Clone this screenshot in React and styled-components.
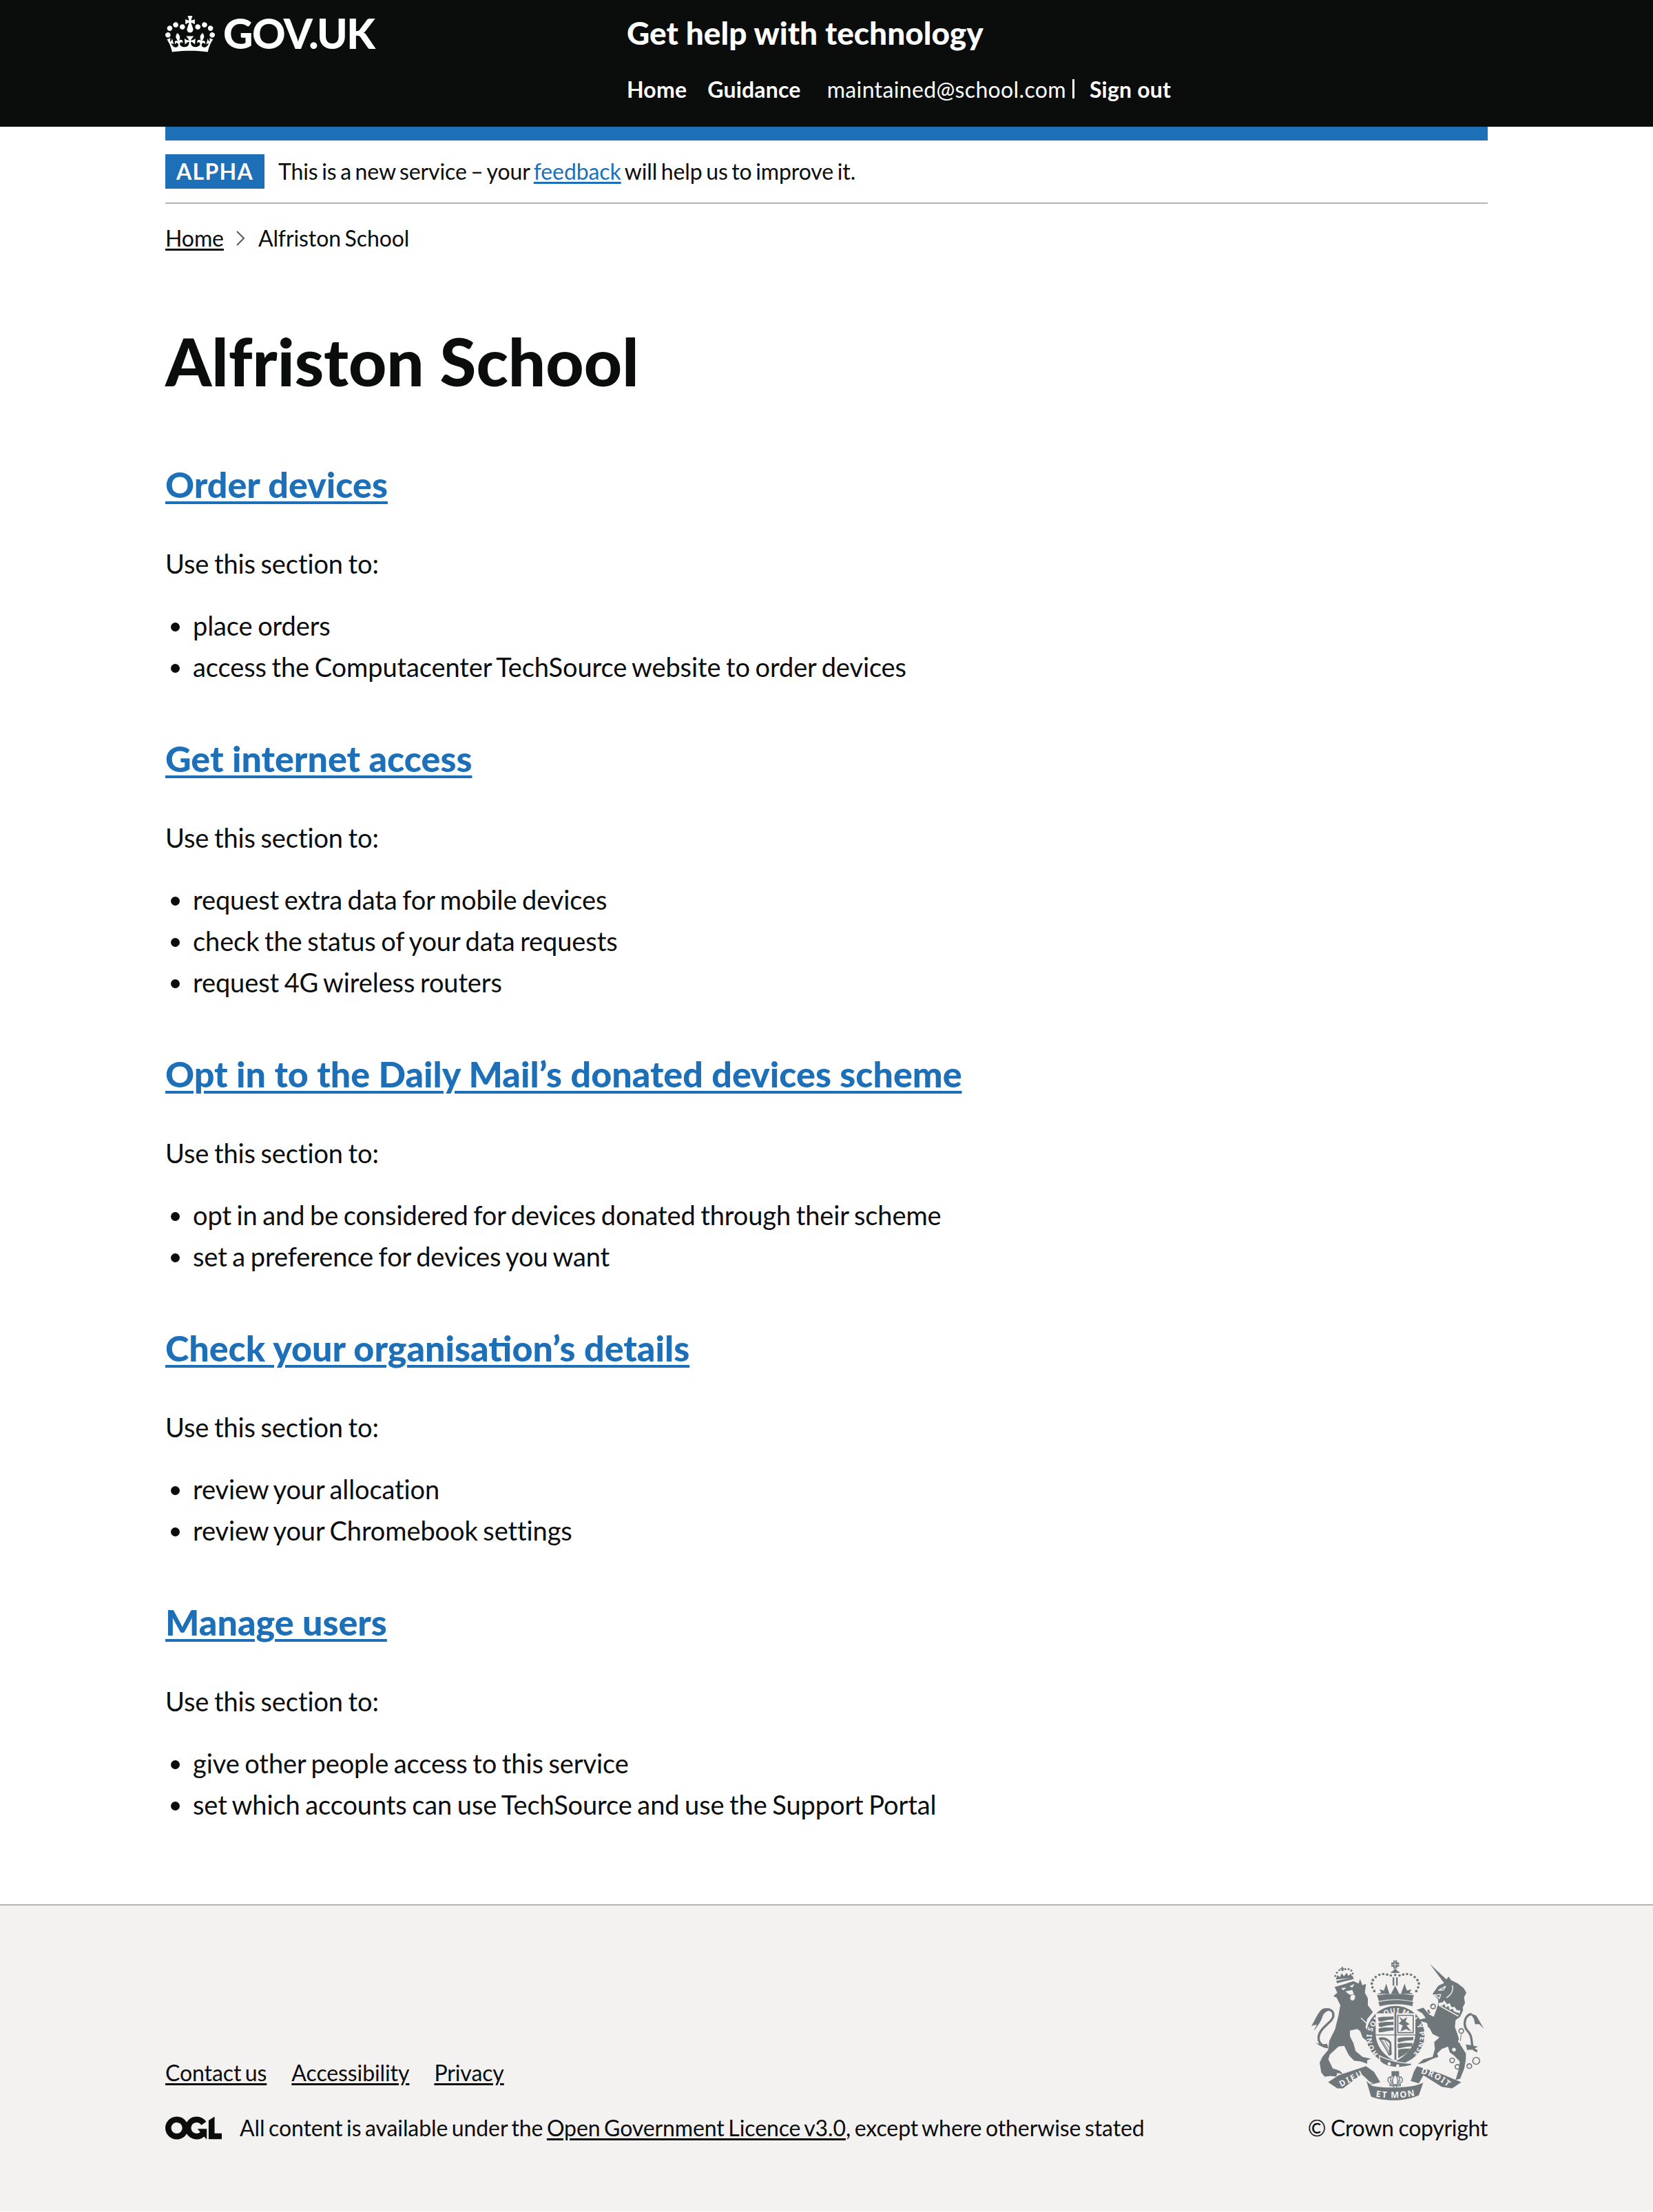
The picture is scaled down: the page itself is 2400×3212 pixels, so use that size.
import React from 'react';
import styled, { createGlobalStyle } from 'styled-components';

const font = `Lato, "Noto Sans", Arial, sans-serif`;
const Global = createGlobalStyle`
  html, body { margin: 0; padding: 0; background: #fff; }
  body { font-family: ${font}; color: #0b0c0c; }
`;

const Header = styled.header`
  background: #0b0c0c; height: 184px; color: #fff;
`;
const Wrap = styled.div`
  width: 1920px; margin: 0 auto;
`;
const HeaderInner = styled(Wrap)`
  display: flex;
`;
const LogoCol = styled.a`
  width: 670px; display: flex; align-items: flex-start; padding-top: 23px; gap: 12px; color: #fff;
`;
const Crown = styled.svg`
  width: 72px; height: 53px; flex: none;
`;
const LogoText = styled.span`
  font: 900 60px/50px ${font}; letter-spacing: -1.5px;
`;
const Service = styled.div`
  padding-top: 20px; display: flex; flex-direction: column;
`;
const ServiceName = styled.div`
  font: 900 46px/56px ${font}; color: #fff;
`;
const Nav = styled.nav`
  display: flex; align-items: center; margin-top: 34px; font: 400 32px/40px ${font};
`;
const NavLink = styled.a`
  font-weight: 700; color: #fff; margin-right: ${p => p.$mr ?? 30}px; letter-spacing: 0.2px;
`;
const NavUser = styled.span`
  margin-left: 8px; padding-right: 12px; margin-right: 22px; position: relative; letter-spacing: 0.35px;
  &::after { content: ""; position: absolute; right: 0; top: 5px; width: 3px; height: 28px; background: #fff; }
`;
const Phase = styled(Wrap)`
  border-top: 20px solid #1d70b8; border-bottom: 2px solid #b1b4b6; padding: 20px 0; display: flex; align-items: center; height: 50px;
`;
const Tag = styled.strong`
  background: #1d70b8; color: #fff; height: 50px; width: 144px; display: flex; align-items: center; justify-content: center;
  font: 700 32px/40px ${font}; letter-spacing: 1.3px; margin-right: 20px; flex: none;
`;
const PhaseText = styled.span`
  font: 400 32px/40px ${font}; letter-spacing: -0.1px; word-spacing: -2.5px;
  a { color: #1d70b8; text-underline-offset: 3px; }
`;
const Breadcrumb = styled(Wrap)`
  display: flex; align-items: center; height: 40px; margin-top: 30px; font: 400 32px/40px ${font}; letter-spacing: -0.1px; word-spacing: -2.5px;
  a { color: #0b0c0c; text-underline-offset: 3px; }
`;
const Chevron = styled.svg`
  width: 16px; height: 24px; margin: 0 18px 0 16px;
`;
const Main = styled(Wrap)`
  padding: 108px 0 42px;
`;
const H1 = styled.h1`
  margin: 0 0 99px; font: 900 96px/100px ${font};
`;
const H2 = styled.h2`
  margin: 0 0 60px; font: 900 52px/60px ${font};
  a { color: #1d70b8; text-underline-offset: 5px; text-decoration-thickness: 4px; }
`;
const P = styled.p`
  margin: 0 0 40px; font: 400 38px/50px ${font}; letter-spacing: -0.1px; word-spacing: -2px;
`;
const List = styled.ul`
  margin: 0 0 78px; padding: 0 0 0 40px; font: 400 38px/50px ${font}; letter-spacing: -0.1px; word-spacing: -2px;
  li { margin-bottom: 10px; }
`;
const Footer = styled.footer`
  background: #f3f2f1; border-top: 2px solid #b1b4b6; height: 446px; box-sizing: border-box;
`;
const FooterInner = styled(Wrap)`
  display: flex; justify-content: space-between; align-items: flex-start; padding-top: 78px;
`;
const FooterLeft = styled.div`
  padding-top: 145px; font: 400 32px/40px ${font}; letter-spacing: -0.1px; word-spacing: -2.5px;
  a { color: #0b0c0c; text-underline-offset: 3px; }
`;
const FooterLinks = styled.div`
  display: flex; gap: 36px;
`;
const Licence = styled.div`
  display: flex; align-items: center; margin-top: 40px; gap: 26px;
`;
const Ogl = styled.svg`
  width: 82px; height: 34px; flex: none;
`;
const Crest = styled.div`
  display: flex; flex-direction: column; align-items: flex-end; font: 400 32px/40px ${font}; letter-spacing: -0.3px; word-spacing: -1px;
`;
const Arms = styled.svg`
  width: 250px; height: 207px; margin: 0 6px 18px 0; display: block;
`;
const Motto = styled.text`
  font: 700 ${p => p.$size}px "Noto Sans", sans-serif; fill: #f3f2f1; letter-spacing: 0;
`;

const sections = [
  ['Order devices', ['place orders', 'access the Computacenter TechSource website to order devices']],
  ['Get internet access', ['request extra data for mobile devices', 'check the status of your data requests', 'request 4G wireless routers']],
  ['Opt in to the Daily Mail’s donated devices scheme', ['opt in and be considered for devices donated through their scheme', 'set a preference for devices you want']],
  ['Check your organisation’s details', ['review your allocation', 'review your Chromebook settings']],
  ['Manage users', ['give other people access to this service', 'set which accounts can use TechSource and use the Support Portal']],
];

const CROWN = "M25 30.2c3.5 1.5 7.7-.2 9.1-3.7 1.5-3.6-.2-7.8-3.9-9.2-3.6-1.4-7.6.3-9.1 3.9-1.4 3.5.3 7.5 3.9 9zM9 39.5c3.6 1.5 7.8-.2 9.2-3.7 1.5-3.6-.2-7.8-3.9-9.1-3.6-1.5-7.6.2-9.1 3.8-1.4 3.5.3 7.5 3.8 9zM4.4 57.2c3.5 1.5 7.7-.2 9.1-3.8 1.5-3.6-.2-7.7-3.9-9.1-3.5-1.5-7.6.3-9.1 3.8-1.4 3.5.3 7.6 3.9 9.1zm38.3-21.4c3.5 1.5 7.7-.2 9.1-3.8 1.5-3.6-.2-7.7-3.9-9.1-3.6-1.5-7.6.3-9.1 3.8-1.3 3.6.4 7.7 3.9 9.1zm64.4-5.6c-3.6 1.5-7.8-.2-9.1-3.7-1.5-3.6.2-7.8 3.8-9.2 3.6-1.4 7.7.3 9.2 3.9 1.3 3.5-.4 7.5-3.9 9zm15.9 9.3c-3.6 1.5-7.7-.2-9.1-3.7-1.5-3.6.2-7.8 3.7-9.1 3.6-1.5 7.7.2 9.2 3.8 1.5 3.5-.3 7.5-3.8 9zm4.7 17.7c-3.6 1.5-7.8-.2-9.2-3.8-1.5-3.6.2-7.7 3.9-9.1 3.6-1.5 7.7.3 9.2 3.8 1.3 3.5-.4 7.6-3.9 9.1zM89.3 35.8c-3.6 1.5-7.8-.2-9.2-3.8-1.4-3.6.2-7.7 3.9-9.1 3.6-1.5 7.7.3 9.2 3.8 1.4 3.6-.3 7.7-3.9 9.1zM69.7 17.7l8.9 4.7V9.3l-8.9 2.8c-.2-.3-.5-.6-.9-.9L72.4 0H59.6l3.5 11.2c-.3.3-.6.5-.9.9l-8.8-2.8v13.1l8.8-4.7c.3.3.6.7.9.9l-5 15.4v.1c-.2.8-.4 1.6-.4 2.4 0 4.1 3.1 7.5 7 8.1h.2c.3 0 .7.1 1 .1.4 0 .7 0 1-.1h.2c4-.6 7.1-4.1 7.1-8.1 0-.8-.1-1.7-.4-2.4V34l-5.1-15.4c.4-.2.7-.6 1-.9zM66 92.8c16.9 0 32.8 1.1 47.1 3.2 4-16.9 8.9-26.7 14-33.5l-9.6-3.4c1 4.9 1.1 7.2 0 10.2-1.5-1.4-3-4.3-4.2-8.7L108.6 76c2.8-2 5-3.2 7.5-3.3-4.4 9.4-10 11.9-13.6 11.2-4.3-.8-6.3-4.6-5.6-7.9 1-4.7 5.7-5.9 8-.5 4.3-8.7-3-11.4-7.6-8.8 7.1-7.2 7.9-13.5 2.1-21.1-8 6.1-8.1 12.3-4.5 20.8-4.7-5.4-12.1-2.5-9.5 6.2 3.4-5.2 7.9-2 7.2 3.1-.6 4.3-6.4 7.8-13.5 7.2-10.3-.9-10.9-8-11.2-13.8 2.5-.5 7.1 1.8 11 7.3L80.2 60c-4.1 4.4-8 5.3-12.3 5.4 1.4-4.4 8-11.6 8-11.6H55.5s6.4 7.2 7.9 11.6c-4.2-.1-8-1-12.3-5.4l1.4 16.4c3.9-5.5 8.5-7.7 10.9-7.3-.3 5.8-.9 12.8-11.1 13.8-7.2.6-12.9-2.9-13.5-7.2-.7-5 3.8-8.3 7.1-3.1 2.7-8.7-4.6-11.6-9.4-6.2 3.7-8.5 3.6-14.7-4.6-20.8-5.8 7.6-5 13.9 2.2 21.1-4.7-2.6-11.9.1-7.7 8.8 2.3-5.5 7.1-4.2 8.1.5.7 3.3-1.3 7.1-5.7 7.9-3.5.7-9-1.8-13.5-11.2 2.5.1 4.7 1.3 7.5 3.3l-4.7-15.4c-1.2 4.4-2.7 7.2-4.3 8.7-1.1-3-.9-5.3 0-10.2l-9.5 3.4c5 6.9 9.9 16.7 14 33.5 14.8-2.1 30.8-3.2 47.7-3.2z";
const OGL = "M421.5 142.8V.1l-50.7 32.3v161.1h112.4v-50.7zm-122.3-9.6A47.12 47.12 0 0 1 221 97.8c0-26 21.1-47.1 47.1-47.1 16.7 0 31.4 8.7 39.7 21.8l42.7-27.2A97.63 97.63 0 0 0 268.1 0c-36.5 0-68.3 20.1-85.1 49.7A98 98 0 0 0 97.8 0C43.9 0 0 43.9 0 97.8s43.9 97.8 97.8 97.8c36.5 0 68.3-20.1 85.1-49.7a97.76 97.76 0 0 0 149.6 25.4l19.4 22.2h3v-87.8h-80l24.3 27.5zM97.8 145c-26 0-47.1-21.1-47.1-47.1s21.1-47.1 47.1-47.1 47.2 21 47.2 47S123.8 145 97.8 145";

const G = '#6f777b';
const BG = '#f3f2f1';

const Ring = ({ x, y, r = 9 }) => <circle cx={x} cy={y} r={r} fill="none" stroke={G} strokeWidth="5" />;

const CrownDots = [[497,178],[478,180],[462,176],[445,174],[428,177],[412,187],[400,200],[395,215],[398,232],[406,248],[516,180],[532,176],[549,174],[566,177],[582,187],[594,200],[600,215],[597,232],[589,248]];
const SmallDots = [[236,182],[243,168],[254,157],[268,156],[280,153],[294,152],[306,158],[312,172],[309,186]];

const CoatOfArms = () => (
  <Arms viewBox="132 110 750 620">
    <g transform="translate(120 105)" fill={G}>
      <path d="M75 385C40 375 35 345 55 315C75 285 115 270 107 240C102 222 80 220 65 225" fill="none" stroke={G} strokeWidth="10" />
      <path d="M90 218L62 220C45 228 30 265 12 297C25 290 32 288 36 292C30 300 26 306 24 315C40 295 55 275 62 250C70 235 82 228 95 228ZM28 367C45 375 62 378 80 372L86 392C65 392 45 380 28 367Z" />
      <path d="M113 125L150 115L195 100L218 110L224 90L234 118L250 112L245 150L258 175L258 205L280 235L255 265L248 300L262 335L275 352L272 364L250 358L235 345L225 318L212 308L180 315L180 340L195 370L205 405L235 430L272 438L255 445L255 460L228 450L198 446L175 422L155 382L130 385L92 420L86 440L105 480L135 490L150 505L125 500L120 515L95 513L70 516L55 498L48 455L60 430L85 400L90 360L115 310L130 250L138 205L122 172L108 165L125 150Z" />
      <path d="M143 130L165 128L150 140ZM178 122L200 112L190 128ZM160 145L190 138L197 155L180 160ZM183 168a10 10 0 1 0 18 6a10 10 0 1 0 -18 -6Z" fill={BG} />
      <path d="M228 260L282 312" stroke={BG} strokeWidth="4" fill="none" />
    </g>
    <g fill={G}>
      {SmallDots.map(([x, y], i) => <circle key={i} cx={x} cy={y} r="4.5" />)}
      <path d="M258 148h6v-6h5v6h6v5h-6v8h-5v-8h-6z" />
      <path d="M238 198L246 178L256 188L264 170L274 184L286 168L292 182L304 172L312 190Z" />
      <path d="M240 204L314 188L316 196L244 214Z" />
    </g>
    <g fill={G}>
      <path d="M489 115h16v9h9v18h-9v8h-16v-8h-9v-18h9z" />
      <path d="M496 116v32M481 133h32" stroke={BG} strokeWidth="2.5" />
      <path d="M497 150l14 14h-28z" /><rect x="479" y="163" width="36" height="6" />
      {CrownDots.map(([x, y], i) => <circle key={i} cx={x} cy={y} r="5.5" />)}
      <path d="M486 188h7v36h-7zM501 188h7v36h-7z" />
      <path d="M414 264C440 258 452 262 472 260L458 216L448 246L428 240L436 254ZM580 264C554 258 542 262 522 260L538 216L548 246L568 240L560 254Z" />
      <path d="M497 225L515 260L479 260Z" />
      <path d="M418 266C470 258 525 258 578 266L572 292C525 282 470 282 426 292Z" />
      <path d="M424 296C470 284 525 284 576 296L571 314C525 302 475 302 430 314Z" />
    </g>
    <circle cx="498" cy="440" r="127" fill={G} />
    <path id="garterPath" d="M424 522A105 105 0 1 1 573 525" fill="none" />
    <Motto $size={31}><textPath href="#garterPath" textLength="490" lengthAdjust="spacing">HONI SOIT QUI MAL Y PENSE</textPath></Motto>
    <path d="M412 345H585V430C585 490 545 530 497 555C450 530 412 490 412 430Z" fill={BG} />
    <g fill={G}>
      <path d="M422 364C440 358 470 362 490 358V372C470 372 448 376 436 382L424 378ZM424 388C445 380 470 384 490 382V396C470 396 448 400 436 406L426 402ZM424 412C445 404 470 408 490 406V420C465 420 448 428 426 428Z" />
      <path d="M514 358L530 372L550 362L542 380L560 392L546 398L568 424L544 414L520 424L530 398L512 390L524 378Z" />
      <path d="M506 352V432H578V352Z M511 356H573V427H511Z" fillRule="evenodd" />
      <path d="M424 452C448 444 470 456 480 472L482 525L470 530C458 505 442 480 424 452ZM436 462C448 480 460 502 470 520L473 478C462 464 450 458 436 462Z" fillRule="evenodd" />
      <path d="M441 463L472 514M451 462L476 504" stroke={G} strokeWidth="3" />
      <path d="M508 454C530 446 555 452 576 448V462C555 462 530 466 514 472L508 468ZM508 478C530 470 555 476 572 474V488C552 490 530 492 514 498L508 494ZM510 504C530 496 548 500 562 498C555 515 535 528 510 540Z" />
      <path d="M412 437H585V441H412ZM494 345H502V548H494Z" />
    </g>
    <path d="M428 530C470 552 530 565 572 562L566 572C520 585 462 585 432 556Z" fill={G} stroke={BG} strokeWidth="4" />
    <circle cx="471" cy="565" r="7" fill={BG} /><circle cx="508" cy="574" r="7" fill={BG} />
    <g transform="translate(495 105)" fill={G}>
      <path d="M153 25L225 92L235 80L245 95L275 110L300 130L312 150L302 170L306 195L296 215L298 226L285 255L265 270L262 300L275 335L285 375L310 415L310 440L303 480L285 525L265 530L280 480L283 450L260 425L240 410L232 385L205 395L185 415L190 430L165 438L130 455L100 462L125 440L165 430L175 395L172 365L195 345L165 330L140 282L100 270L135 260L120 240L95 225L125 215L150 245L170 255L188 205L190 180L165 155L190 120L215 108Z" />
      <path d="M360 405C320 395 350 350 320 320C290 290 310 240 335 245" fill="none" stroke={G} strokeWidth="10" />
      <path d="M330 240L355 250L388 307L368 287L350 287L345 265ZM310 375L362 385L340 398L315 400Z" />
      <path d="M190 140L222 122L212 138ZM172 160L200 158L195 175ZM252 118C256 140 245 160 225 172" fill="none" stroke={BG} strokeWidth="4" />
      <circle cx="258" cy="398" r="8" fill={BG} /><circle cx="283" cy="362" r="7" fill={BG} />
      <path d="M190 195L210 192L215 183L228 200L240 196L246 212L262 213L270 226L286 228L282 242L276 254L192 208Z" fill={BG} />
      <path d="M196 205L278 250L282 240L258 232L252 220L240 226L234 208L222 215L216 198L208 208Z" />
      <path d="M158 210L168 200M147 295L160 280M290 330L286 360" stroke={G} strokeWidth="3" fill="none" />
      <Ring x={167} y={210} r={10} /><Ring x={155} y={292} r={10} /><Ring x={290} y={317} r={10} />
      <Ring x={250} y={445} r={10} /><Ring x={273} y={473} r={10} /><Ring x={325} y={470} r={10} /><Ring x={355} y={447} r={15} />
      <path d="M152 240L145 225" stroke={G} strokeWidth="8" />
    </g>
    <path d="M205 645L250 615L370 575L405 600L432 645L395 655L375 632L350 610L270 672L245 672Z" fill={G} />
    <path d="M592 575L700 610L785 645L745 672L700 665L620 615L600 650L565 640L578 600Z" fill={G} />
    <path d="M372 640L395 660C430 672 560 672 600 655L620 645L600 702C540 730 450 730 392 708Z" fill={G} />
    <path d="M372 638L400 650M622 645L596 654" stroke={BG} strokeWidth="3" fill="none" />
    <path id="dieuPath" d="M262 666Q315 636 372 610" fill="none" />
    <path id="etPath" d="M412 708Q497 722 584 704" fill="none" />
    <path id="droitPath" d="M608 606Q680 626 730 670" fill="none" />
    <Motto $size={36}><textPath href="#dieuPath" textLength="108">DIEU</textPath></Motto>
    <Motto $size={38}><textPath href="#etPath" textLength="172">ET MON</textPath></Motto>
    <Motto $size={36}><textPath href="#droitPath" textLength="132">DROIT</textPath></Motto>
    <rect x="481" y="597" width="33" height="24" fill={G} />
    <path d="M497 610C510 628 512 645 503 660H491C482 645 484 628 497 610ZM480 622C465 620 460 640 472 648C478 652 486 648 486 640L476 640ZM514 622C529 620 534 640 522 648C516 652 508 648 508 640L518 640ZM474 655H520V660L505 662L497 676L489 662L474 660Z" fill={BG} stroke={G} strokeWidth="4" />
  </Arms>
);

export default function App() {
  return (
    <>
      <Global />
      <Header>
        <HeaderInner>
          <LogoCol>
            <Crown viewBox="0 0 132 97"><path fill="#fff" d={CROWN} /></Crown>
            <LogoText>GOV.UK</LogoText>
          </LogoCol>
          <Service>
            <ServiceName>Get help with technology</ServiceName>
            <Nav>
              <NavLink>Home</NavLink>
              <NavLink>Guidance</NavLink>
              <NavUser>maintained@school.com</NavUser>
              <NavLink $mr={0}>Sign out</NavLink>
            </Nav>
          </Service>
        </HeaderInner>
      </Header>
      <Phase>
        <Tag>ALPHA</Tag>
        <PhaseText>This is a new service – your <a href="#">feedback</a> will help us to improve it.</PhaseText>
      </Phase>
      <Breadcrumb>
        <a href="#">Home</a>
        <Chevron viewBox="0 0 16 24"><path d="M3 2l10 10L3 22" fill="none" stroke="#505a5f" strokeWidth="2" /></Chevron>
        <span>Alfriston School</span>
      </Breadcrumb>
      <Main>
        <H1>Alfriston School</H1>
        {sections.map(([t, items]) => (
          <section key={t}>
            <H2><a href="#">{t}</a></H2>
            <P>Use this section to:</P>
            <List>{items.map(i => <li key={i}>{i}</li>)}</List>
          </section>
        ))}
      </Main>
      <Footer>
        <FooterInner>
          <FooterLeft>
            <FooterLinks>
              <a href="#">Contact us</a><a href="#">Accessibility</a><a href="#">Privacy</a>
            </FooterLinks>
            <Licence>
              <Ogl viewBox="0 0 483.2 195.7"><path fill="#0b0c0c" d={OGL} /></Ogl>
              <span>All content is available under the <a href="#">Open Government Licence v3.0</a>, except where otherwise stated</span>
            </Licence>
          </FooterLeft>
          <Crest>
            <CoatOfArms />
            <span>© Crown copyright</span>
          </Crest>
        </FooterInner>
      </Footer>
    </>
  );
}
